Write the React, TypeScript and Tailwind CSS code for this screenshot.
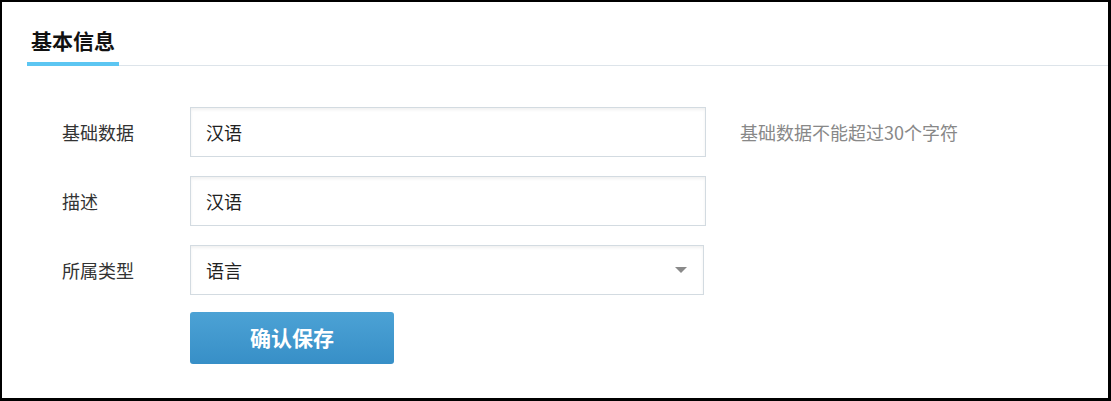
import React from 'react';

const fontStack = "font-['Noto_Sans_CJK_SC','Noto_Sans',sans-serif]";

const rows = [
  { label: '基础数据', value: '汉语', hint: '基础数据不能超过30个字符' },
  { label: '描述', value: '汉语' },
];

const App = () => {
  return (
    <div className={`w-[1111px] h-[401px] bg-white border-l-2 border-t-2 border-r-[3px] border-b-[3px] border-black ${fontStack}`}>
      {/* tab header */}
      <div className="ml-[25px] mt-[24px] flex border-b border-[#dde4ea]">
        <div className="-mb-px px-[4px] pb-[8px] border-b-4 border-[#5cc6f2]">
          <h2 className="text-[21px] leading-[28px] font-bold text-[#111]">基本信息</h2>
        </div>
      </div>

      {/* form */}
      <div className="mt-[41px] pl-[60px] flex flex-col gap-[19px]">
        {rows.map((row) => (
          <div key={row.label} className="flex items-center">
            <label className="w-[128px] text-[18px] text-[#333]">{row.label}</label>
            <input
              readOnly
              value={row.value}
              className="w-[516px] h-[50px] px-[15px] text-[18px] text-[#222] border border-[#d3dbe1] shadow-[inset_0_2px_3px_rgba(0,0,0,0.06)] outline-none"
            />
            {row.hint && <span className="ml-[34px] text-[18px] text-[#888]">{row.hint}</span>}
          </div>
        ))}

        <div className="flex items-center">
          <label className="w-[128px] text-[18px] text-[#333]">所属类型</label>
          <div className="w-[514px] h-[50px] pl-[15px] pr-[16px] flex items-center justify-between border border-[#d3dbe1] shadow-[inset_0_2px_3px_rgba(0,0,0,0.06)]">
            <span className="text-[18px] text-[#222]">语言</span>
            <svg width="12" height="6" viewBox="0 0 12 6">
              <path d="M0 0h12L6 6z" fill="#8a8a8a" />
            </svg>
          </div>
        </div>

        <div className="flex -mt-[2px]">
          <div className="w-[128px]" />
          <button className="w-[204px] h-[52px] rounded-[3px] bg-gradient-to-b from-[#4ca2d5] to-[#378fc7] text-white text-[21px] font-bold">
            确认保存
          </button>
        </div>
      </div>
    </div>
  );
};

export default App;
